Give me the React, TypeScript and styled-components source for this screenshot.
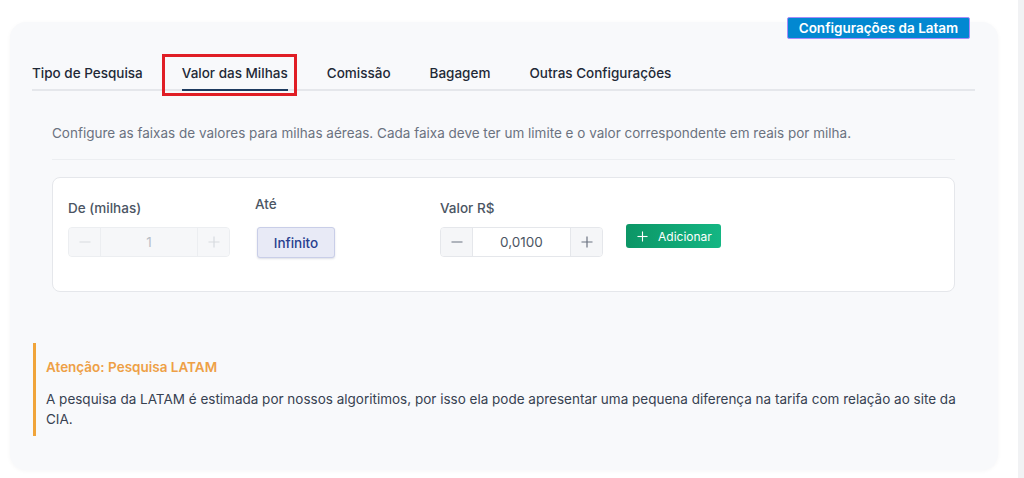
import React from "react";
import styled, { createGlobalStyle } from "styled-components";

const GlobalStyle = createGlobalStyle`
  html, body { margin: 0; padding: 0; background: #ffffff; }
  body { font-family: Inter, "Noto Sans", sans-serif; color: #1f2937; -webkit-font-smoothing: antialiased; }
  * { box-sizing: border-box; }
`;

const Shell = styled.div`
  display: flex;
  height: 478px;
  overflow: hidden;
`;

const Main = styled.main`
  flex: 1;
  padding: 22px 20px 0 10px;
`;

const ScrollTrack = styled.div`
  width: 6px;
  height: 100%;
  background: #f1f2f4;
`;

const Panel = styled.section`
  display: flow-root;
  height: 448px;
  background: #f8f9fb;
  border-radius: 16px;
  box-shadow: 0 1px 4px rgba(15, 23, 42, 0.04);
  padding: 0 23px 0 22px;
`;

const HeaderRow = styled.div`
  display: flex;
  justify-content: flex-end;
  padding-right: 5px;
  margin-top: -5px;
`;

const LatamButton = styled.button`
  height: 22px;
  width: 183px;
  background: #0288d1;
  color: #ffffff;
  border: 1px solid #a78bfa;
  border-radius: 2px;
  font-family: Inter, sans-serif;
  font-size: 13.5px;
  font-weight: 600;
  padding: 0;
  cursor: pointer;
`;

const TabList = styled.nav`
  display: flex;
  gap: 39px;
  margin-top: 24px;
  border-bottom: 2px solid #e5e7eb;
`;

const Tab = styled.div<{ $active?: boolean }>`
  position: relative;
  font-size: 13.5px;
  line-height: 20px;
  font-weight: 500;
  color: #1f2937;
  padding-bottom: 6px;
  margin-bottom: -2px;
  border-bottom: 2px solid ${(p) => (p.$active ? "#1e3a5f" : "transparent")};
`;

const Highlight = styled.span`
  position: absolute;
  left: -20px;
  right: -9px;
  top: -9px;
  bottom: -7px;
  border: 3px solid #e01e25;
  pointer-events: none;
`;

const Content = styled.div`
  padding: 0 20px;
`;

const Description = styled.p`
  margin: 32px 0 0;
  padding-bottom: 16px;
  border-bottom: 1px solid #eceef1;
  font-size: 13.5px;
  line-height: 20px;
  color: #6b7280;
`;

const Card = styled.div`
  margin-top: 17px;
  height: 115px;
  background: #ffffff;
  border: 1px solid #e5e7eb;
  border-radius: 8px;
  padding: 20px 15px;
  display: flex;
  align-items: flex-start;
`;

const Field = styled.div<{ $width: number; $gap: number }>`
  width: ${(p) => p.$width}px;
  margin-right: ${(p) => p.$gap}px;
  display: flex;
  flex-direction: column;
`;

const Label = styled.label<{ $raised?: boolean }>`
  font-size: 13.5px;
  line-height: 20px;
  font-weight: 500;
  color: #4b5563;
  margin-top: ${(p) => (p.$raised ? "-4px" : "0")};
  margin-bottom: ${(p) => (p.$raised ? "13px" : "9px")};
`;

const Stepper = styled.div<{ $disabled?: boolean }>`
  display: flex;
  height: 30px;
  border: 1px solid ${(p) => (p.$disabled ? "#eceef1" : "#e5e7eb")};
  border-radius: 4px;
  overflow: hidden;
  background: ${(p) => (p.$disabled ? "#f6f7f9" : "#ffffff")};
`;

const StepButton = styled.button<{ $disabled?: boolean }>`
  width: 32px;
  flex: none;
  border: none;
  padding: 0;
  display: flex;
  align-items: center;
  justify-content: center;
  background: ${(p) => (p.$disabled ? "#f6f7f9" : "#f5f6f8")};
  color: ${(p) => (p.$disabled ? "#d7dbe0" : "#6b7280")};
  &:first-child { border-right: 1px solid ${(p) => (p.$disabled ? "#eceef1" : "#e5e7eb")}; }
  &:last-child { border-left: 1px solid ${(p) => (p.$disabled ? "#eceef1" : "#e5e7eb")}; }
`;

const StepValue = styled.div<{ $disabled?: boolean }>`
  flex: 1;
  display: flex;
  align-items: center;
  justify-content: center;
  font-size: 13.5px;
  color: ${(p) => (p.$disabled ? "#b8bec7" : "#4b5563")};
  background: ${(p) => (p.$disabled ? "#f6f7f9" : "#ffffff")};
`;

const InfiniteButton = styled.button`
  margin-left: 2px;
  width: 78px;
  height: 31px;
  background: #e8eaf6;
  border: 1px solid #c9cee8;
  border-radius: 3px;
  box-shadow: 0 1px 2px rgba(30, 41, 90, 0.15);
  color: #283f8f;
  font-family: Inter, sans-serif;
  font-size: 13.5px;
  font-weight: 500;
  padding: 0;
`;

const AddButton = styled.button`
  margin-top: 26px;
  height: 24px;
  width: 95px;
  display: flex;
  align-items: center;
  gap: 10px;
  padding: 0 0 0 11px;
  border: none;
  border-radius: 3px;
  background: linear-gradient(90deg, #0c9666, #14b683);
  color: #ffffff;
  font-family: Inter, sans-serif;
  font-size: 12px;
  font-weight: 400;
`;

const Alert = styled.div`
  margin: 51px 0 0 1px;
  border-left: 3px solid #f0a43a;
  padding: 14px 10px 7px 10px;
`;

const AlertTitle = styled.div`
  font-size: 13.5px;
  line-height: 20px;
  font-weight: 600;
  color: #eea046;
`;

const AlertText = styled.p`
  margin: 12px 0 0;
  font-size: 13.5px;
  line-height: 20px;
  color: #374151;
`;

const Minus = () => (
  <svg width="12" height="12" viewBox="0 0 12 12">
    <line x1="0.5" y1="6" x2="11.5" y2="6" stroke="currentColor" strokeWidth="1.2" />
  </svg>
);

const Plus = ({ size = 12 }: { size?: number }) => (
  <svg width={size} height={size} viewBox="0 0 12 12">
    <line x1="0.5" y1="6" x2="11.5" y2="6" stroke="currentColor" strokeWidth="1.2" />
    <line x1="6" y1="0.5" x2="6" y2="11.5" stroke="currentColor" strokeWidth="1.2" />
  </svg>
);

const NumberStepper = ({ value, disabled }: { value: string; disabled?: boolean }) => (
  <Stepper $disabled={disabled}>
    <StepButton $disabled={disabled}><Minus /></StepButton>
    <StepValue $disabled={disabled}>{value}</StepValue>
    <StepButton $disabled={disabled}><Plus /></StepButton>
  </Stepper>
);

const tabs = ["Tipo de Pesquisa", "Valor das Milhas", "Comissão", "Bagagem", "Outras Configurações"];

export default function App() {
  return (
    <>
      <GlobalStyle />
      <Shell>
        <Main>
          <Panel>
            <HeaderRow>
              <LatamButton>Configurações da Latam</LatamButton>
            </HeaderRow>
            <TabList>
              {tabs.map((t) => (
                <Tab key={t} $active={t === "Valor das Milhas"}>
                  {t}
                  {t === "Valor das Milhas" && <Highlight />}
                </Tab>
              ))}
            </TabList>
            <Content>
              <Description>
                Configure as faixas de valores para milhas aéreas. Cada faixa deve ter um limite e o valor correspondente em reais por milha.
              </Description>
              <Card>
                <Field $width={162} $gap={25}>
                  <Label>De (milhas)</Label>
                  <NumberStepper value="1" disabled />
                </Field>
                <Field $width={185} $gap={0}>
                  <Label $raised>Até</Label>
                  <InfiniteButton>Infinito</InfiniteButton>
                </Field>
                <Field $width={163} $gap={23}>
                  <Label>Valor R$</Label>
                  <NumberStepper value="0,0100" />
                </Field>
                <AddButton>
                  <Plus size={11} />
                  Adicionar
                </AddButton>
              </Card>
            </Content>
            <Alert>
              <AlertTitle>Atenção: Pesquisa LATAM</AlertTitle>
              <AlertText>
                A pesquisa da LATAM é estimada por nossos algoritimos, por isso ela pode apresentar uma pequena diferença na tarifa com relação ao site da CIA.
              </AlertText>
            </Alert>
          </Panel>
        </Main>
        <ScrollTrack />
      </Shell>
    </>
  );
}
